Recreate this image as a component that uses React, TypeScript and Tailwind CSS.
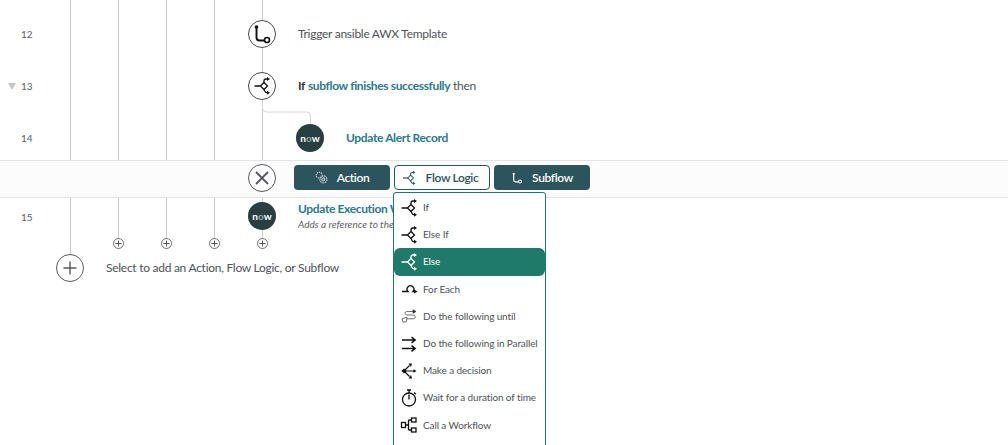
import type { ReactNode } from 'react';

const S = { fill: 'none', stroke: 'currentColor', strokeWidth: 1.5 };

function IfIcon({ className = 'w-5 h-5' }: { className?: string }) {
  return (
    <svg viewBox="0 0 20 20" className={className} {...S}>
      <path d="M2.5 10H8.5" />
      <path d="M12 6.5 15.5 10 12 13.5 8.5 10z" strokeWidth="1.3" />
      <path d="M12 6.5V5a2 2 0 0 1 2-2h1" strokeWidth="1.3" />
      <path d="M12 13.5l1.2 2.2a2 2 0 0 0 1.6 1h.7" strokeWidth="1.3" />
      <path d="M15 1 18 3 15 5z" fill="currentColor" stroke="none" />
      <path d="M15 14.8 18 16.8 15 18.8z" fill="currentColor" stroke="none" />
    </svg>
  );
}

function SubflowIcon({ className = 'w-5 h-5' }: { className?: string }) {
  return (
    <svg viewBox="0 0 20 20" className={className} {...S}>
      <circle cx="4.5" cy="3" r="1.8" fill="currentColor" stroke="none" />
      <path d="M4.5 3v10.5a3 3 0 0 0 3 3h5" strokeWidth="1.9" />
      <circle cx="15" cy="16" r="2.5" strokeWidth="1.7" />
    </svg>
  );
}

function ActionIcon() {
  return (
    <svg viewBox="0 0 14 14" className="w-[13px] h-[13px] text-[#b9c6c9]" fill="none" stroke="currentColor" strokeWidth="1.3">
      <circle cx="4.5" cy="4.5" r="3.2" strokeDasharray="1.6 0.8" />
      <circle cx="9" cy="9" r="3.8" strokeDasharray="1.8 0.8" />
      <circle cx="9" cy="9" r="1.5" />
    </svg>
  );
}

function ForEachIcon() {
  return (
    <svg viewBox="0 0 20 20" className="w-5 h-5" {...S}>
      <path d="M3 12.5h6a3.4 3.4 0 1 1 5 0h1" strokeWidth="1.3" />
      <path d="M15 10.6 18.5 12.5 15 14.4z" fill="currentColor" stroke="none" />
    </svg>
  );
}

function UntilIcon() {
  return (
    <svg viewBox="0 0 20 20" className="w-5 h-5 text-[#333]" fill="none" stroke="currentColor" strokeWidth="0.7">
      <path d="M8 5.5h6.5" />
      <path d="M14 3.8 17 5.5 14 7.2z" fill="currentColor" />
      <path d="M8 5.5C5.5 5.5 5.5 9 8 9h6c3 0 3 3.8 0 3.8H8" />
      <path d="M8 11.2 3 12.8l1 3.4 3.4-.5z" />
    </svg>
  );
}

function ParallelIcon() {
  return (
    <svg viewBox="0 0 20 20" className="w-5 h-5" {...S}>
      <path d="M3 6h13M12.5 3.2l3.6 2.8-3.6 2.8" />
      <path d="M3 14.5h13M12.5 11.7l3.6 2.8-3.6 2.8" />
    </svg>
  );
}

function DecisionIcon() {
  return (
    <svg viewBox="0 0 20 20" className="w-5 h-5" {...S}>
      <path d="M5 7.4 7.6 10 5 12.6 2.4 10z" fill="currentColor" stroke="none" />
      <path d="M5 10 10.5 4.5M5 10H15M5 10l5.5 5.5" strokeWidth="1.2" />
      <path d="M9.5 2.6 13 2.6 12 6z" fill="currentColor" stroke="none" />
      <path d="M14.5 8.2 17.5 10 14.5 11.8z" fill="currentColor" stroke="none" />
      <path d="M9.5 17.4 13 17.4 12 14z" fill="currentColor" stroke="none" />
    </svg>
  );
}

function TimerIcon() {
  return (
    <svg viewBox="0 0 20 20" className="w-5 h-5" fill="none" stroke="currentColor" strokeWidth="1.3">
      <circle cx="10" cy="11.5" r="6.5" />
      <path d="M10 11.5V6.5M8 2h4M10 2v3M15 4.5l1.8 1.8" />
    </svg>
  );
}

function WorkflowIcon() {
  return (
    <svg viewBox="0 0 20 20" className="w-5 h-5" fill="none" stroke="currentColor" strokeWidth="1.3">
      <rect x="2.5" y="7.5" width="4" height="5" />
      <rect x="12.5" y="3" width="4.5" height="4" />
      <rect x="12.5" y="13" width="4.5" height="4" />
      <path d="M6.5 10h3M9.5 5V15M9.5 5h3M9.5 15h3" />
    </svg>
  );
}

function NowBadge() {
  return (
    <div className="relative z-10 w-[28px] h-[28px] shrink-0 rounded-full bg-[#293e40] flex items-center justify-center">
      <span className="text-[10px] leading-none font-bold text-white">
        n<span className="text-[#81b5a1]">o</span>w
      </span>
    </div>
  );
}

function StepCircle({ children }: { children: ReactNode }) {
  return (
    <div className="relative z-10 w-[28px] h-[28px] shrink-0 rounded-full border border-[#4a4a4a] bg-white flex items-center justify-center text-[#111]">
      {children}
    </div>
  );
}

function Row({ num, caret, h, children }: { num?: string; caret?: boolean; h: string; children: ReactNode }) {
  return (
    <div className={`flex items-center ${h}`}>
      <div className="w-[248px] shrink-0 pl-[8px] flex items-center text-[10px] text-[#5e6066]">
        <span className="w-[13px]">
          {caret && <span className="block w-0 h-0 border-x-[4px] border-x-transparent border-t-[7px] border-t-[#c4c6c8]" />}
        </span>
        {num}
      </div>
      {children}
    </div>
  );
}

function MenuItem({ icon, label, active }: { icon: ReactNode; label: string; active?: boolean }) {
  return (
    <div
      className={`flex items-center h-[27.2px] pl-[5px] gap-[4px] rounded-md text-[10px] tracking-[-0.12px] ${
        active ? 'bg-[#1f7a6a] text-white' : 'text-[#4f5258]'
      }`}
    >
      <span className={`w-5 h-5 shrink-0 ${active ? 'text-white' : 'text-[#111]'}`}>{icon}</span>
      <span className="whitespace-nowrap">{label}</span>
    </div>
  );
}

function BarButton({ icon, label, active }: { icon: ReactNode; label: string; active?: boolean }) {
  return (
    <div
      className={`w-[96px] h-[25px] rounded-sm flex items-center justify-center gap-[9px] text-[12px] font-semibold tracking-[-0.35px] ${
        active ? 'bg-white border border-[#2c545c] text-[#2c545c] pr-[5px]' : 'bg-[#2c545c] text-white'
      }`}
    >
      {icon}
      {label}
    </div>
  );
}

function SmallPlus({ left }: { left: string }) {
  return (
    <div className={`absolute top-[238px] ${left} w-[11px] h-[11px] rounded-full border border-[#6c6f74] bg-white flex items-center justify-center z-10`}>
      <svg viewBox="0 0 9 9" className="w-[9px] h-[9px]" stroke="#55585d" strokeWidth="1">
        <path d="M4.5 1.5v6M1.5 4.5h6" />
      </svg>
    </div>
  );
}

export default function App() {
  return (
    <div
      className="relative w-[1008px] h-[445px] overflow-hidden bg-white text-[#4f5258]"
      style={{ fontFamily: '"Lato", "Noto Sans", sans-serif' }}
    >
      {/* tree guides */}
      <div className="absolute left-[70px] top-0 h-[256px] w-px bg-[#c9cbcf]" />
      <div className="absolute left-[118px] top-0 h-[240px] w-px bg-[#c9cbcf]" />
      <div className="absolute left-[166px] top-0 h-[240px] w-px bg-[#c9cbcf]" />
      <div className="absolute left-[214px] top-0 h-[240px] w-px bg-[#c9cbcf]" />
      <div className="absolute left-[262px] top-0 h-[240px] w-px bg-[#c9cbcf]" />
      <svg className="absolute left-[260px] top-[100px] w-[54px] h-[26px]" fill="none" stroke="#d4d6d8" strokeWidth="1">
        <path d="M2.5 2v6a4 4 0 0 0 4 4h40a4 4 0 0 1 4 4v10" />
      </svg>
      <SmallPlus left="left-[113px]" />
      <SmallPlus left="left-[161px]" />
      <SmallPlus left="left-[209px]" />
      <SmallPlus left="left-[257px]" />

      <div className="relative flex flex-col pt-[8px]">
        <Row num="12" h="h-[52px]">
          <StepCircle><SubflowIcon /></StepCircle>
          <span className="ml-[22px] text-[12px] tracking-[-0.27px]">Trigger ansible AWX Template</span>
        </Row>
        <Row num="13" caret h="h-[52px]">
          <StepCircle><IfIcon /></StepCircle>
          <span className="ml-[22px] text-[12px] tracking-[-0.27px]">
            <b className="font-bold text-[#333]">If</b>{' '}
            <b className="font-bold text-[#2a7a8c] tracking-[-0.36px]">subflow finishes successfully</b> then
          </span>
        </Row>
        <Row num="14" h="h-[48px] pt-[4px]">
          <div className="ml-[48px] flex items-center">
            <NowBadge />
            <span className="ml-[22px] text-[12px] font-bold text-[#2a7a8c] tracking-[-0.36px]">Update Alert Record</span>
          </div>
        </Row>

        {/* picker bar */}
        <div className="relative z-20 h-[38px] pb-[3px] bg-[#fcfcfc] border-y border-[#e3e4e6] flex items-center pl-[248px]">
          <div className="w-[28px] h-[28px] shrink-0 rounded-full border border-[#55585d] bg-white flex items-center justify-center">
            <svg viewBox="0 0 16 16" className="w-4 h-4" stroke="#55585d" strokeWidth="1.8">
              <path d="M2 2l12 12M14 2 2 14" />
            </svg>
          </div>
          <div className="ml-[18px] flex gap-[4px]">
            <BarButton icon={<ActionIcon />} label="Action" />
            <BarButton icon={<IfIcon className="w-4 h-4" />} label="Flow Logic" active />
            <BarButton icon={<SubflowIcon className="w-[12px] h-[12px]" />} label="Subflow" />
          </div>
        </div>

        <div className="flex h-[38px]">
          <div className="w-[248px] shrink-0 pl-[21px] pt-[13px] text-[10px] leading-[12px] text-[#5e6066]">15</div>
          <div className="pt-[4px]"><NowBadge /></div>
          {/* text runs under the open menu, so it is cut at the menu edge */}
          <div className="ml-[22px] pt-[3px] w-[95px] overflow-hidden">
            <div className="text-[12px] leading-[16px] font-bold text-[#2a7a8c] tracking-[-0.36px] whitespace-nowrap">Update Execution Workflow</div>
            <div className="mt-px text-[10px] leading-[13px] italic text-[#5e6066] whitespace-nowrap">Adds a reference to the workflow</div>
          </div>
        </div>

        <div className="mt-[18px] flex items-center h-[28px] pl-[56px]">
          <div className="relative z-10 w-[28px] h-[28px] rounded-full border border-[#55585d] bg-white flex items-center justify-center">
            <svg viewBox="0 0 16 16" className="w-4 h-4" stroke="#55585d" strokeWidth="1.4">
              <path d="M8 1.5v13M1.5 8h13" />
            </svg>
          </div>
          <span className="ml-[22px] text-[12px] tracking-[-0.27px]">Select to add an Action, Flow Logic, or Subflow</span>
        </div>
      </div>

      {/* flow logic menu */}
      <div className="absolute z-30 left-[393px] top-[192px] w-[153px] h-[270px] bg-white border border-[#1f7a6a] rounded-t-[3px] py-px">
        <MenuItem icon={<IfIcon />} label="If" />
        <MenuItem icon={<IfIcon />} label="Else If" />
        <MenuItem icon={<IfIcon />} label="Else" active />
        <MenuItem icon={<ForEachIcon />} label="For Each" />
        <MenuItem icon={<UntilIcon />} label="Do the following until" />
        <MenuItem icon={<ParallelIcon />} label="Do the following in Parallel" />
        <MenuItem icon={<DecisionIcon />} label="Make a decision" />
        <MenuItem icon={<TimerIcon />} label="Wait for a duration of time" />
        <MenuItem icon={<WorkflowIcon />} label="Call a Workflow" />
      </div>
    </div>
  );
}
